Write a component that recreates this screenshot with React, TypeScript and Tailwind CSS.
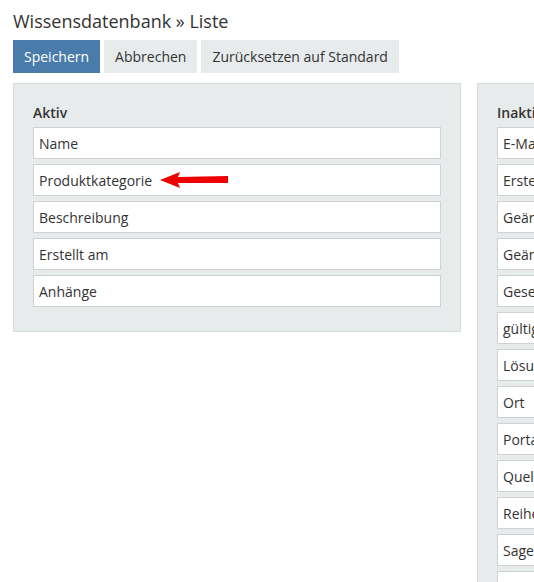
const activeFields = ['Name', 'Produktkategorie', 'Beschreibung', 'Erstellt am', 'Anhänge'];

const inactiveFields = [
  'E-Mail',
  'Erstellt von',
  'Geändert am',
  'Geändert von',
  'Gesehen',
  'gültig bis',
  'Lösung',
  'Ort',
  'Portal',
  'Quelle',
  'Reihenfolge',
  'Sagen-ID',
  'Schlagwörter',
];

function RedArrow() {
  return (
    <svg width="70" height="16" viewBox="0 0 70 16" className="ml-2 shrink-0">
      <polygon points="0,8 20,0 18,5 68,4 68,11 18,11 20,16" fill="#ee0000" />
    </svg>
  );
}

function FieldList({ title, fields }: { title: string; fields: string[] }) {
  return (
    <div className="w-[448px] shrink-0 bg-[#e8ebec] border border-[#d9dcdd] pt-[19px] pb-[24px] px-[19px]">
      <div className="text-[14px] font-semibold text-[#333] leading-[20px] mb-[4px]">{title}</div>
      <div className="flex flex-col gap-[5px]">
        {fields.map((f) => (
          <div
            key={f}
            className="h-[32px] bg-white border border-[#cfd2d3] flex items-center px-[5px] text-[14px] text-[#333] whitespace-nowrap overflow-hidden"
          >
            {f}
            {f === 'Produktkategorie' && <RedArrow />}
          </div>
        ))}
      </div>
    </div>
  );
}

export default function App() {
  return (
    <div
      className="w-[534px] h-[582px] overflow-hidden bg-white px-[13px] pt-[8px]"
      style={{ fontFamily: '"Open Sans", sans-serif' }}
    >
      <h1 className="text-[18px] leading-[26px] text-[#333] font-normal">Wissensdatenbank » Liste</h1>

      <div className="flex gap-[4px] mt-[6px]">
        <button className="h-[33px] px-[11px] bg-[#4a7cab] text-white text-[14px]">Speichern</button>
        <button className="h-[33px] px-[11px] bg-[#e8ebec] text-[#333] text-[14px]">Abbrechen</button>
        <button className="h-[33px] px-[11px] bg-[#e8ebec] text-[#333] text-[14px]">Zurücksetzen auf Standard</button>
      </div>

      <div className="flex gap-[16px] mt-[10px] items-start">
        <FieldList title="Aktiv" fields={activeFields} />
        <FieldList title="Inaktiv" fields={inactiveFields} />
      </div>
    </div>
  );
}
